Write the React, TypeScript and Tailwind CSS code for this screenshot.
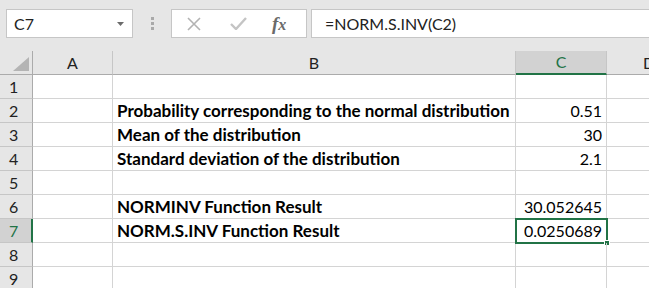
import React from "react";

const cols = ["A", "B", "C", "D"];

type Row = { n: number; label?: string; value?: string };

const rows: Row[] = [
  { n: 1 },
  { n: 2, label: "Probability corresponding to the normal distribution", value: "0.51" },
  { n: 3, label: "Mean of the distribution", value: "30" },
  { n: 4, label: "Standard deviation of the distribution", value: "2.1" },
  { n: 5 },
  { n: 6, label: "NORMINV Function Result", value: "30.052645" },
  { n: 7, label: "NORM.S.INV Function Result", value: "0.0250689" },
  { n: 8 },
  { n: 9 },
];

const font = { fontFamily: "Lato, 'Open Sans', sans-serif" };

export default function App() {
  return (
    <div className="w-[649px] h-[288px] overflow-hidden bg-[#e6e6e6] text-black" style={font}>
      {/* ── Formula bar ───────────────────────────────────────── */}
      <div className="flex items-center h-[51px] pl-[6px] pb-[4px]">
        <div className="w-[127px] h-[29px] bg-white border border-[#c6c6c6] flex items-center justify-between pl-[7px] pr-[8px]">
          <span className="text-[16px] text-[#222]">C7</span>
          <svg width="7" height="4" viewBox="0 0 7 4"><path d="M0 0h7L3.5 4z" fill="#6b6b6b" /></svg>
        </div>
        <div className="w-[38px] flex flex-col items-center gap-[2px]">
          <span className="w-[3px] h-[3px] bg-[#a9a9a9]" />
          <span className="w-[3px] h-[3px] bg-[#a9a9a9]" />
          <span className="w-[3px] h-[3px] bg-[#a9a9a9]" />
        </div>
        <div className="w-[136px] h-[29px] bg-white border border-[#c6c6c6] flex items-center">
          <svg className="ml-[15px]" width="14" height="14" viewBox="0 0 14 14">
            <path d="M1 1l12 12M13 1L1 13" stroke="#b3b3b3" strokeWidth="1.6" />
          </svg>
          <svg className="ml-[29px]" width="17" height="13" viewBox="0 0 17 13">
            <path d="M1 7l5 5L16 1" stroke="#c4c4c4" strokeWidth="2.4" fill="none" />
          </svg>
          <span
            className="ml-[25px] text-[19px] italic font-bold text-[#6a6a6a] leading-none"
            style={{ fontFamily: "'Liberation Serif', serif" }}
          >
            f<span className="text-[16px]">x</span>
          </span>
        </div>
        <div className="ml-[4px] flex-1 h-[29px] bg-white border border-[#c6c6c6] border-r-0 flex items-center pl-[13px]">
          <span className="text-[16px] text-[#222]">=NORM.S.INV(C2)</span>
        </div>
      </div>

      {/* ── Sheet ─────────────────────────────────────────────── */}
      <div className="grid grid-cols-[33px_80px_403px_91px_1fr] bg-white">
        {/* header row */}
        <div className="h-[24px] bg-[#e6e6e6] border-r border-b border-[#ababab] flex items-end justify-end pr-[3px] pb-[3px]">
          <svg width="16" height="14" viewBox="0 0 16 14"><path d="M16 0v14H0z" fill="#b4b4b4" /></svg>
        </div>
        {cols.map((c) =>
          c === "C" ? (
            <div
              key={c}
              className="h-[24px] bg-[#d2d2d2] border-r border-[#c6c6c6] border-b-2 border-b-[#217346] flex items-center justify-center text-[16px] text-[#217346]"
            >
              {c}
            </div>
          ) : (
            <div
              key={c}
              className={`h-[24px] bg-[#e6e6e6] border-r border-[#c6c6c6] border-b border-b-[#ababab] flex items-center text-[16px] text-[#222] ${c === "D" ? "pl-[36px]" : "justify-center"}`}
            >
              {c}
            </div>
          )
        )}

        {rows.map((r) => (
          <React.Fragment key={r.n}>
            <div
              className={`h-[24px] border-b border-[#c6c6c6] flex items-center pl-[9px] text-[16px] ${
                r.n === 7
                  ? "bg-[#d2d2d2] border-r-2 border-r-[#217346] text-[#217346]"
                  : "bg-[#e6e6e6] border-r border-r-[#ababab] text-[#222]"
              }`}
            >
              {r.n}
            </div>
            <div className="h-[24px] border-r border-b border-[#d4d4d4]" />
            <div className="h-[24px] border-r border-b border-[#d4d4d4] flex items-center pl-[4px] text-[17px] font-bold whitespace-nowrap">
              {r.label}
            </div>
            <div className="relative h-[24px] border-r border-b border-[#d4d4d4] flex items-center justify-end pr-[4px] text-[16px]">
              {r.value}
              {r.n === 7 && (
                <>
                  <div className="absolute -left-[1px] -top-[1px] w-[93px] h-[26px] border-2 border-[#217346]" />
                  <div className="absolute -right-[4px] -bottom-[4px] w-[6px] h-[6px] bg-[#217346] border border-white" />
                </>
              )}
            </div>
            <div className="h-[24px] border-b border-[#d4d4d4]" />
          </React.Fragment>
        ))}
      </div>
    </div>
  );
}
